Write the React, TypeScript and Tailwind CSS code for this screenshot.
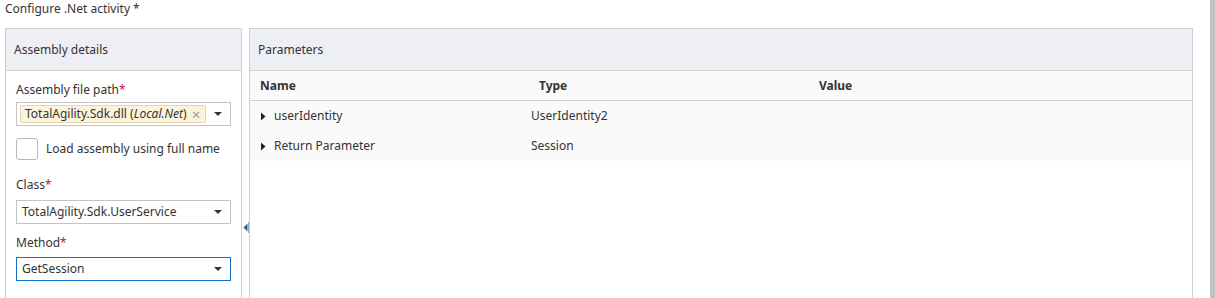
import React from "react";

const Caret = () => (
  <svg width="10" height="6" viewBox="0 0 10 6" className="shrink-0">
    <path d="M1 1 L9 1 L5 5 Z" fill="#333" />
  </svg>
);

const Tri = () => (
  <svg width="6" height="9" viewBox="0 0 6 9" className="shrink-0">
    <path d="M1 0.5 L5.5 4.5 L1 8.5 Z" fill="#222" />
  </svg>
);

const Req = () => <span className="text-[#c0143c]">*</span>;

export default function App() {
  return (
    <div
      className="w-[1215px] h-[298px] bg-white text-[#333] text-[12px] whitespace-nowrap overflow-hidden flex"
      style={{ fontFamily: '"Noto Sans", "Open Sans", sans-serif' }}
    >
      <div className="flex-1 pl-[5px] flex flex-col">
        <div className="h-[28px] leading-[18px] text-[#333]">Configure .Net activity *</div>
        <div className="flex flex-1">
          {/* Left panel */}
          <div className="w-[237px] border-l border-t border-r border-[#cfcfcf] flex flex-col">
            <div className="h-[42px] bg-[#eeeff4] border-b border-[#cfcfcf] flex items-center pl-[8px]">
              Assembly details
            </div>
            <div className="pl-[10px] pr-[10px] pt-[9px] flex flex-col">
              <div className="h-[20px] leading-[20px]">
                Assembly file path<Req />
              </div>
              <div className="h-[24px] mt-[2px] border border-[#c4c4c4] flex items-center pl-[3px] pr-[7px] justify-between">
                <div className="h-[18px] bg-[#fcf3dd] border border-[#e6d7ae] rounded-[2px] flex items-center pl-[4px] pr-[5px] leading-[16px]">
                  <span>TotalAgility.Sdk.dll (</span>
                  <span className="italic text-[12px]">Local.Net</span>
                  <span>)</span>
                  <span className="ml-[5px] text-[#999] text-[15px]">×</span>
                </div>
                <Caret />
              </div>
              <div className="flex items-center mt-[12px] h-[22px]">
                <div className="w-[22px] h-[22px] border border-[#b8b8b8] rounded-[3px] bg-white" />
                <span className="ml-[8px]">Load assembly using full name</span>
              </div>
              <div className="h-[20px] leading-[20px] mt-[15px]">
                Class<Req />
              </div>
              <div className="h-[24px] mt-[5px] border border-[#c4c4c4] flex items-center pl-[5px] pr-[7px] justify-between">
                <span>TotalAgility.Sdk.UserService</span>
                <Caret />
              </div>
              <div className="h-[20px] leading-[20px] mt-[9px]">
                Method<Req />
              </div>
              <div className="h-[24px] mt-[4px] border border-[#1170c8] flex items-center pl-[5px] pr-[7px] justify-between">
                <span>GetSession</span>
                <Caret />
              </div>
            </div>
          </div>
          {/* Splitter */}
          <div className="w-[7px] relative">
            <svg width="5" height="9" viewBox="0 0 5 9" className="absolute left-[1px] top-[195px]">
              <path d="M4.5 0.5 L0.5 4.5 L4.5 8.5 Z" fill="#555" />
            </svg>
            <div className="absolute right-0 top-[194px] w-[1px] h-[11px] bg-[#7ab0e8]" />
          </div>
          {/* Right panel */}
          <div className="w-[944px] border-l border-t border-r border-[#cfcfcf] flex flex-col">
            <div className="h-[42px] bg-[#eeeff4] border-b border-[#cfcfcf] flex items-center pl-[8px]">
              Parameters
            </div>
            <div className="h-[30px] bg-[#fafafa] border-b border-[#cfcfcf] flex items-center font-bold text-[12px] text-[#333]">
              <div className="w-[289px] pl-[10px]">Name</div>
              <div className="w-[280px]">Type</div>
              <div>Value</div>
            </div>
            <div className="bg-[#fafafa]">
              {[
                ["userIdentity", "UserIdentity2"],
                ["Return Parameter", "Session"],
              ].map(([n, t]) => (
                <div key={n} className="h-[30px] flex items-center">
                  <div className="w-[281px] pl-[10px] flex items-center">
                    <Tri />
                    <span className="ml-[8px]">{n}</span>
                  </div>
                  <div>{t}</div>
                </div>
              ))}
            </div>
          </div>
        </div>
      </div>
      <div className="w-[5px] bg-[#c2c2c2]" />
    </div>
  );
}
